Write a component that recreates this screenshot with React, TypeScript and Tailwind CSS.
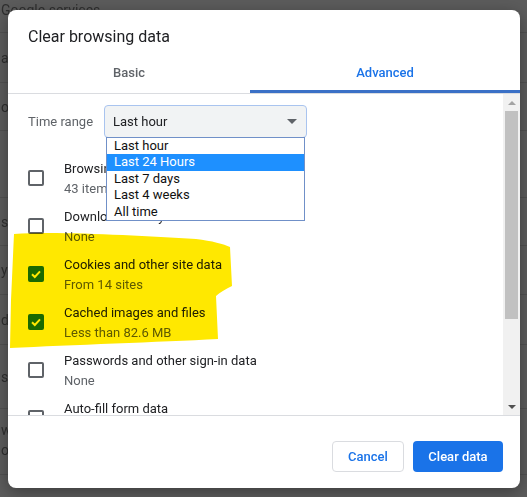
import { useState } from 'react'

const ranges = ['Last hour', 'Last 24 Hours', 'Last 7 days', 'Last 4 weeks', 'All time']

const items = [
  { label: 'Browsing history', sub: '43 items', checked: false },
  { label: 'Download history', sub: 'None', checked: false },
  { label: 'Cookies and other site data', sub: 'From 14 sites', checked: true },
  { label: 'Cached images and files', sub: 'Less than 82.6 MB', checked: true },
  { label: 'Passwords and other sign-in data', sub: 'None', checked: false },
  { label: 'Auto-fill form data', sub: 'None', checked: false },
]

// page behind the modal, only a sliver shows at the edges
const bgRows = [
  { h: 'h-[33px]', lines: ['Google services'], align: 'justify-start' },
  { h: 'h-[50px]', lines: ['ads'], align: 'justify-center' },
  { h: 'h-[48px]', lines: ['on'], align: 'justify-center' },
  { h: 'h-[67px]', lines: [], align: 'justify-center' },
  { h: 'h-[48px]', lines: ['ss'], align: 'justify-center' },
  { h: 'h-[49px]', lines: ['yn'], align: 'justify-center' },
  { h: 'h-[50px]', lines: ['d'], align: 'justify-center' },
  { h: 'h-[64px]', lines: ['se'], align: 'justify-center' },
  { h: 'h-[66px]', lines: ['ws', 'oi'], align: 'justify-start pt-[11px]' },
  { h: 'h-[40px]', lines: ['ge'], align: 'justify-end' },
]

export default function App() {
  const [tab, setTab] = useState<'basic' | 'advanced'>('advanced')

  return (
    <div className="relative w-[527px] h-[497px] overflow-hidden bg-[#5c5c5c] font-['Roboto',sans-serif]">
      <div className="flex flex-col">
        {bgRows.map((r, i) => (
          <div key={i} className={`${r.h} flex flex-col ${r.align} border-b border-[#515151] text-[14px] text-[#2f2f2f]`}>
            {r.lines.map(t => (
              <span key={t} className="pl-[1px] leading-[20px] whitespace-nowrap">{t}</span>
            ))}
          </div>
        ))}
      </div>

      <div className="absolute left-[8px] top-[10px] w-[512px] h-[478px] bg-white rounded-[8px] shadow-[0_4px_16px_rgba(0,0,0,0.35)] flex flex-col overflow-hidden">
        <div className="h-[43px] pt-[17px] pl-[20px] text-[16px] leading-[20px] text-[#202124]">
          Clear browsing data
        </div>

        <div className="h-[41px] flex border-b border-[#dadce0] text-[13px] font-medium">
          <button
            onClick={() => setTab('basic')}
            className={`w-[242px] h-[40px] flex items-center justify-center ${tab === 'basic' ? 'text-[#1a73e8] border-b-[3px] border-[#3a70c6] pt-[3px]' : 'text-[#5f6368]'}`}
          >
            Basic
          </button>
          <button
            onClick={() => setTab('advanced')}
            className={`flex-1 h-[40px] flex items-center justify-center ${tab === 'advanced' ? 'text-[#1a73e8] border-b-[3px] border-[#3a70c6] pt-[3px]' : 'text-[#5f6368]'}`}
          >
            Advanced
          </button>
        </div>

        <div className="h-[321px] flex">
          <div className="flex-1 pl-[20px] overflow-hidden">
            <div className="pt-[11px] flex items-center h-[44px]">
              <span className="w-[76px] text-[13px] text-[#5f6368]">Time range</span>
              <div className="relative w-[203px] h-[33px] rounded-[4px] bg-[#f1f3f4] border-[1.5px] border-[#a9c4ef] flex items-center pl-[8px] pr-[8px]">
                <span className="flex-1 text-[13px] text-[#202124]">Last hour</span>
                <svg width="10" height="5" viewBox="0 0 10 5" className="mr-[1px]">
                  <path d="M0 0 L10 0 L5 5 Z" fill="#5f6368" />
                </svg>
                <div className="absolute left-[1px] top-full w-[199px] bg-white border border-[#7090c8] z-10">
                  {ranges.map((r, i) => (
                    <div
                      key={r}
                      className={`h-[16.4px] pl-[7px] text-[13px] leading-[16px] ${i === 1 ? 'bg-[#1e90ff] text-white' : 'text-[#111]'}`}
                    >
                      {r}
                    </div>
                  ))}
                </div>
              </div>
            </div>

            <div className="mt-[17px] flex flex-col">
              {items.map(it => (
                <div key={it.label} className="h-[48px] pt-[4px] flex items-start shrink-0">
                  <Checkbox checked={it.checked} />
                  <div className="ml-[20px] text-[13px] leading-[20px]">
                    <div className="text-[#202124]">{it.label}</div>
                    <div className="text-[#5f6368]">{it.sub}</div>
                  </div>
                </div>
              ))}
            </div>
          </div>

          <div className="w-[17px] bg-[#f1f1f1] flex flex-col">
            <div className="h-[17px] flex items-center justify-center">
              <svg width="8" height="4" viewBox="0 0 8 4">
                <path d="M0 4 L8 4 L4 0 Z" fill="#a3a3a3" />
              </svg>
            </div>
            <div className="mx-[2px] h-[208px] bg-[#c1c1c1]" />
            <div className="flex-1" />
            <div className="h-[17px] flex items-center justify-center">
              <svg width="8" height="4" viewBox="0 0 8 4">
                <path d="M0 0 L8 0 L4 4 Z" fill="#505050" />
              </svg>
            </div>
          </div>
        </div>

        <div className="flex-1 border-t border-[#dadce0] flex justify-end items-end gap-[9px] pr-[17px] pb-[16px]">
          <button className="w-[72px] h-[31px] rounded-[4px] border border-[#dadce0] bg-white text-[13px] font-medium text-[#1a73e8]">
            Cancel
          </button>
          <button className="w-[90px] h-[31px] rounded-[4px] bg-[#1a73e8] text-[13px] font-medium text-white">
            Clear data
          </button>
        </div>
      </div>

      <svg className="absolute inset-0 pointer-events-none mix-blend-multiply" width="527" height="497" viewBox="0 0 527 497">
        <path
          d="M14 234 C60 231 140 236 196 239 C212 241 224 244 230 247 L232 286 C226 289 220 292 216 296 L218 339 C160 342 70 345 10 348 L11 300 C12 280 13 255 14 234 Z"
          fill="#ffe800"
        />
      </svg>
    </div>
  )
}

function Checkbox({ checked }: { checked: boolean }) {
  if (checked) {
    return (
      <div className="mt-[11px] w-[16px] h-[16px] rounded-[2px] bg-[#1a73e8] flex items-center justify-center shrink-0">
        <svg width="12" height="12" viewBox="0 0 12 12">
          <path d="M2 6.2 L4.8 9 L10 3.3" stroke="white" strokeWidth="2" fill="none" />
        </svg>
      </div>
    )
  }
  return <div className="mt-[11px] w-[16px] h-[16px] rounded-[2px] border-2 border-[#5f6368] shrink-0" />
}
